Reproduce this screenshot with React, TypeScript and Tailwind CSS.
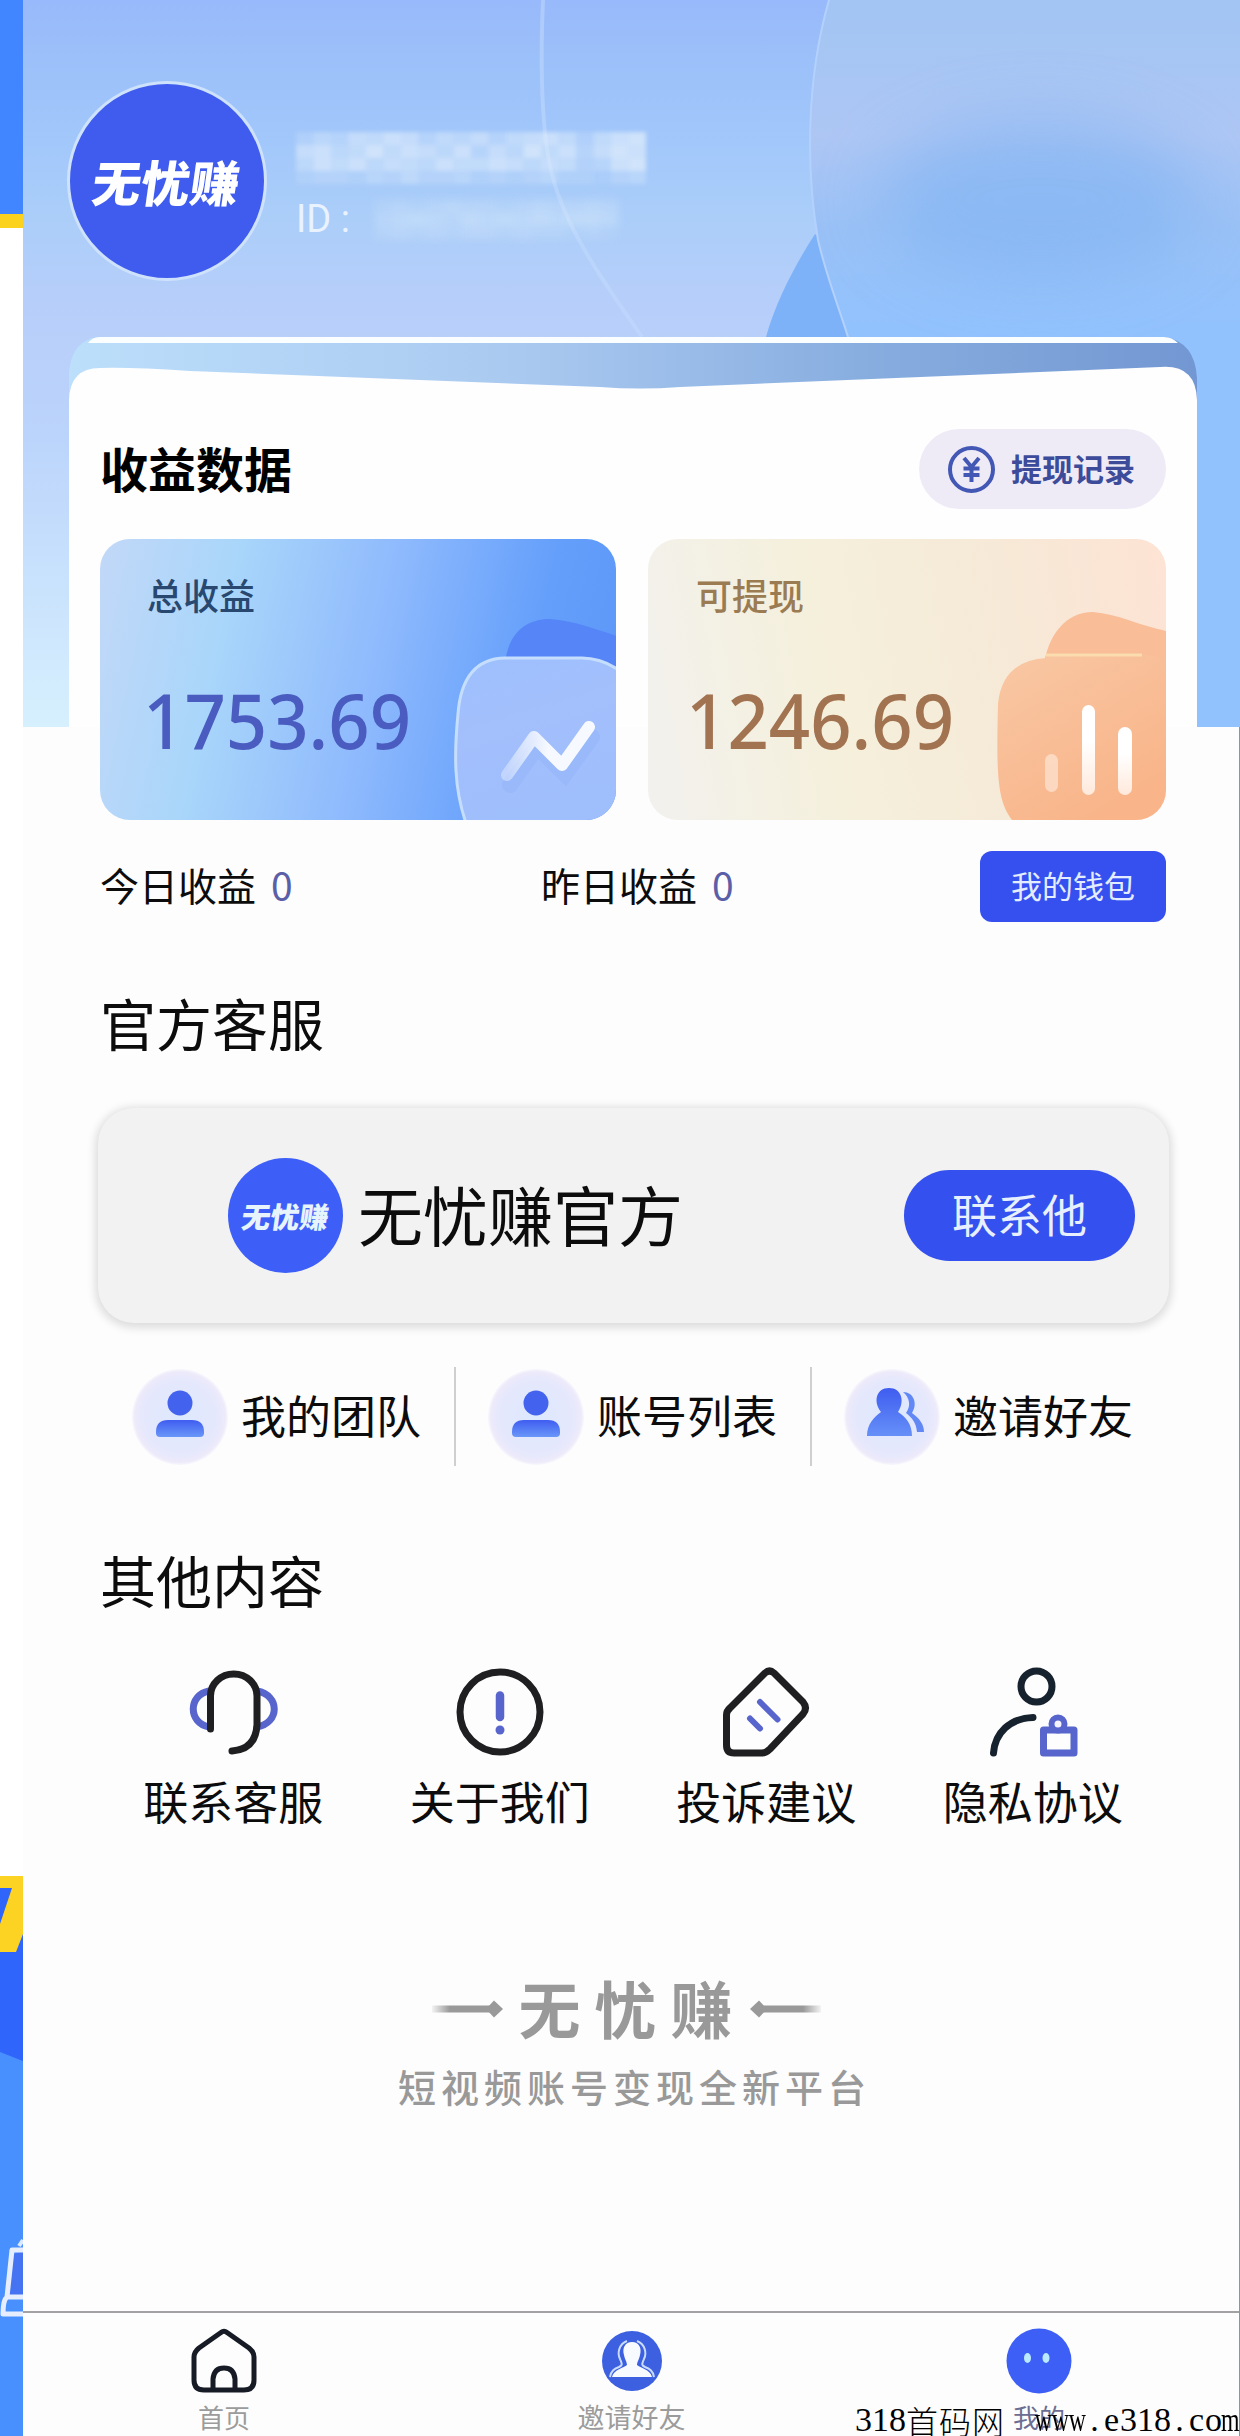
import React from 'react';

const nameMosaic = [
  [3, 5, 4, 7, 6, 8, 7, 4, 6, 5, 7, 4, 6, 7, 8, 6, 3, 6, 8, 9],
  [7, 8, 5, 6, 9, 6, 8, 7, 5, 8, 4, 7, 5, 9, 6, 8, 4, 7, 9, 8],
  [5, 8, 6, 8, 5, 7, 6, 5, 8, 6, 6, 8, 7, 5, 7, 6, 3, 4, 8, 9],
  [2, 3, 3, 2, 4, 3, 5, 3, 3, 4, 2, 3, 2, 3, 4, 2, 2, 1, 3, 4],
];

const idMosaic = [
  [2, 3, 2, 3, 4, 3, 3, 2, 3, 4, 3, 3, 4, 3],
  [3, 4, 5, 4, 3, 5, 4, 5, 4, 5, 4, 5, 5, 4],
  [2, 3, 2, 3, 2, 3, 3, 2, 3, 2, 2, 1, 2, 1],
];

function Mosaic({ rows, cell, className }: { rows: number[][]; cell: number; className: string }) {
  return (
    <svg className={className} width={rows[0].length * cell} height={rows.length * 13} viewBox={`0 0 ${rows[0].length * cell} ${rows.length * 13}`}>
      {rows.map((row, y) =>
        row.map((v, x) => (
          <rect key={`${x}-${y}`} x={x * cell} y={y * 13} width={cell} height={13} fill="#e3effb" opacity={v / 13} />
        ))
      )}
    </svg>
  );
}

function Backdrop() {
  return (
    <svg className="absolute left-0 top-0" width="1217" height="727" viewBox="23 0 1217 727">
      <defs>
        <linearGradient id="sky" x1="0" y1="0" x2="0" y2="1">
          <stop offset="0" stopColor="#98b9fb" />
          <stop offset="0.08" stopColor="#9cc0f9" />
          <stop offset="0.16" stopColor="#9fc5fb" />
          <stop offset="0.3" stopColor="#abcef9" />
          <stop offset="0.42" stopColor="#b7cefa" />
          <stop offset="0.6" stopColor="#bbd4fb" />
          <stop offset="0.8" stopColor="#c9e2fd" />
          <stop offset="1" stopColor="#d7f0fe" />
        </linearGradient>
        <linearGradient id="orb" gradientUnits="userSpaceOnUse" x1="0" y1="0" x2="0" y2="340">
          <stop offset="0" stopColor="#a2c5f3" />
          <stop offset="0.4" stopColor="#adc6f4" />
          <stop offset="0.68" stopColor="#99c1f6" />
          <stop offset="1" stopColor="#91c2fe" />
        </linearGradient>
        <linearGradient id="band" x1="0" y1="0" x2="1" y2="0">
          <stop offset="0" stopColor="#bcdffb" />
          <stop offset="0.4" stopColor="#aac9f0" />
          <stop offset="0.7" stopColor="#88aee0" />
          <stop offset="1" stopColor="#7397d2" />
        </linearGradient>
        <filter id="soft" x="-40%" y="-60%" width="180%" height="220%">
          <feGaussianBlur stdDeviation="32" />
        </filter>
      </defs>
      <rect x="23" width="1217" height="727" fill="url(#sky)" />
      <path d="M543 0 C540 70 541 130 552 175 C568 235 610 290 642 337" fill="none" stroke="#c4dcfd" strokeWidth="4" opacity="0.5" />
      <path d="M815 234 C797 262 776 300 766 337 H870 V280 Z" fill="#7eb2f8" />
      <path d="M829 0 C806 80 806 170 818 240 C826 275 838 305 848 337 V360 H1150 V727 H1240 V0 Z" fill="url(#orb)" />
      <path d="M829 0 C806 80 806 170 818 240 C826 275 838 305 848 337" fill="none" stroke="#b3d1fc" strokeWidth="2" />
      <ellipse cx="1040" cy="200" rx="160" ry="80" fill="#84b5f3" opacity="0.7" filter="url(#soft)" />
      {/* folded edge of the card */}
      <path d="M98 337 H1165 Q1195 342 1197 378 V400 H69 V372 Q72 340 98 337 Z" fill="url(#band)" />
      <path d="M88 343 Q92 337 100 337 H1164 Q1172 337 1178 343 Z" fill="#fbfeff" />
      <path d="M69 727 V400 Q70 368 100 368 Q130 367 190 371 L600 387 Q640 390 680 387 L1160 367 Q1196 364 1197 400 V727 Z" fill="#fefefe" />
    </svg>
  );
}

function SideStrip() {
  return (
    <aside className="flex w-[23px] flex-none flex-col bg-white">
      <div className="h-[214px] bg-[#4286ff]" />
      <div className="h-[14px] bg-[#fbd31f]" />
      <div className="h-[1648px]" />
      <svg width="23" height="560" viewBox="0 0 23 560">
        <rect width="23" height="560" fill="#4790fd" />
        <path d="M0 0 H23 V185 L0 176 Z" fill="#3065fb" />
        <path d="M0 0 H23 V58 L16 76 H0 V48 L12 12 H0 Z" fill="#fcd322" />
        <path d="M23 375 L11 379 L7 420 H23 Z" fill="#4673f2" />
        <path d="M23 374 H12 L7 421 H25 M7 421 Q3 424 3 438 H23" fill="none" stroke="#e6eefe" strokeWidth="5" strokeLinejoin="round" />
        <path d="M19 370 L23 364" stroke="#dbe8fe" strokeWidth="4" />
      </svg>
    </aside>
  );
}

function BlueArt() {
  return (
    <svg className="absolute inset-0" width="517" height="281" viewBox="0 0 517 281">
      <defs>
        <linearGradient id="tileBlue" x1="0" y1="0" x2="0.3" y2="1">
          <stop offset="0" stopColor="#9dc0fd" />
          <stop offset="0.45" stopColor="#a3bffc" />
          <stop offset="1" stopColor="#9fbefc" />
        </linearGradient>
        <linearGradient id="zig" x1="0" y1="0" x2="1" y2="0">
          <stop offset="0" stopColor="#ffffff" stopOpacity="0.35" />
          <stop offset="0.5" stopColor="#f6f9ff" />
        </linearGradient>
      </defs>
      <path d="M405 125 C408 95 425 80 450 80 C475 82 495 90 517 97 V160 H405 Z" fill="#5585f6" />
      <path d="M366 284 C354 250 354 215 358 175 Q362 120 405 119 H482 Q502 119 520 132 V284 Z" fill="url(#tileBlue)" stroke="#c6defe" strokeWidth="3" />
      <path d="M407 237 L434 199 L462 226 L489 189" transform="translate(3 9)" fill="none" stroke="#7fa5f7" strokeWidth="16" strokeLinecap="round" opacity="0.2" />
      <path d="M407 236 L434 198 L462 226 L489 188" fill="none" stroke="url(#zig)" strokeWidth="12" strokeLinecap="round" strokeLinejoin="round" />
    </svg>
  );
}

function OrangeArt() {
  return (
    <svg className="absolute inset-0" width="518" height="281" viewBox="0 0 518 281">
      <defs>
        <linearGradient id="tileOrange" x1="0" y1="0" x2="0.6" y2="1">
          <stop offset="0" stopColor="#f8c8a4" />
          <stop offset="1" stopColor="#f9b489" />
        </linearGradient>
        <linearGradient id="bar" x1="0" y1="0" x2="0" y2="1">
          <stop offset="0.4" stopColor="#ffffff" />
          <stop offset="1" stopColor="#ffe9db" />
        </linearGradient>
      </defs>
      <path d="M395 130 C400 95 418 73 445 73 C470 75 490 86 518 92 V170 H395 Z" fill="#f9bd98" />
      <path d="M364 281 C350 262 348 240 350 165 Q354 122 398 119 L402 115 H494 Q508 116 518 122 V281 Z" fill="url(#tileOrange)" />
      <path d="M398 116 H494" stroke="#fbdcae" strokeWidth="3" />
      <rect x="397" y="215" width="13" height="38" rx="6.5" fill="#fde0cc" opacity="0.8" />
      <rect x="434" y="166" width="13" height="90" rx="6.5" fill="url(#bar)" />
      <rect x="470" y="188" width="14" height="68" rx="7" fill="url(#bar)" />
    </svg>
  );
}

function PersonIcon({ id }: { id: string }) {
  return (
    <svg width="98" height="98" viewBox="0 0 98 98">
      <defs>
        <linearGradient id={id} x1="0" y1="0" x2="0" y2="1">
          <stop offset="0" stopColor="#3f5df0" />
          <stop offset="1" stopColor="#6a97f9" />
        </linearGradient>
        <radialGradient id={`${id}-bg`}>
          <stop offset="0" stopColor="#dce8fe" />
          <stop offset="0.8" stopColor="#e6e8fc" />
          <stop offset="0.94" stopColor="#edeafa" />
          <stop offset="1" stopColor="#edeafa" stopOpacity="0.3" />
        </radialGradient>
      </defs>
      <circle cx="49" cy="49" r="48" fill={`url(#${id}-bg)`} />
      <circle cx="49" cy="35" r="12.5" fill="#4362ee" />
      <path d="M25 64 Q25 52 37 52 H61 Q73 52 73 64 V65 Q73 69 69 69 H29 Q25 69 25 65 Z" fill={`url(#${id})`} />
    </svg>
  );
}

function FriendsIcon() {
  return (
    <svg width="98" height="98" viewBox="0 0 98 98">
      <defs>
        <linearGradient id="fr" x1="0" y1="0" x2="0" y2="1">
          <stop offset="0" stopColor="#3f5df0" />
          <stop offset="1" stopColor="#6690f8" />
        </linearGradient>
      </defs>
      <circle cx="49" cy="49" r="48" fill="url(#team-bg)" />
      <path d="M60 24 C71 24 75 36 69 45 C76 50 81 56 81 64 H74 C73 54 69 50 63 45 C68 38 67 30 60 24 Z" fill="#6288f5" />
      <path d="M46 20 C59 20 62 34 55 44 C63 49 69 56 69 68 H24 C24 56 31 49 38 44 C30 34 33 20 46 20 Z" fill="url(#fr)" />
    </svg>
  );
}

const shortcuts = [
  { label: '我的团队', icon: <PersonIcon id="team" /> },
  { label: '账号列表', icon: <PersonIcon id="accounts" /> },
  { label: '邀请好友', icon: <FriendsIcon /> },
];

const others = [
  {
    label: '联系客服',
    icon: (
      <>
        <path d="M21 24 C0 28 0 56 21 60 M69 24 C92 28 92 56 69 60" stroke="#5765cc" />
        <path d="M22.500 62 V29 A23.200 22 0 0 1 69 29 V58 C68 74 60 83 44 84" stroke="#1f1f21" />
      </>
    ),
  },
  {
    label: '关于我们',
    icon: (
      <>
        <circle cx="45" cy="45" r="40" stroke="#1f1f21" />
        <path d="M45 28.500 V50" stroke="#5765cc" strokeWidth="8.5" />
        <path d="M45 63 V63.1" stroke="#5765cc" strokeWidth="9" />
      </>
    ),
  },
  {
    label: '投诉建议',
    icon: (
      <>
        <path d="M44 6 Q48.500 2 53 6 L82 35 Q87 41 82 47 L49 82 Q45 86 41 86 H13 Q5.500 86 5.500 78 V48 Q5.500 44 9 41 Z" stroke="#1f1f21" />
        <path d="M39 35 L56.500 52.500 M29 51.500 L39 61.500" stroke="#5765cc" strokeWidth="6" />
      </>
    ),
  },
  {
    label: '隐私协议',
    icon: (
      <>
        <circle cx="48.500" cy="19.500" r="15.500" stroke="#17222f" />
        <path d="M5.500 86 C7 66 22 51 45 50.500" stroke="#17222f" />
        <path d="M55.500 63 H86 V86 H55.500 Z" stroke="#5765cc" />
        <circle cx="70" cy="57" r="6.500" stroke="#5765cc" strokeWidth="6" fill="#f3f4fd" />
      </>
    ),
  },
];

function Watermark() {
  return (
    <div className="absolute bottom-[-1px] right-0 flex h-[34px] items-center font-['Liberation_Serif','Noto_Sans_CJK_SC',serif] text-[34px] leading-[34px] text-black">
      <span>318</span>
      <span className="mr-[30px] font-['Noto_Sans_CJK_SC',sans-serif] text-[32px] font-light tracking-[1px]">首码网</span>
      {'www.e318.com'.split('').map((c, i) => (
        <span key={i} className="flex w-[17px] justify-center">
          <span className={c === 'w' || c === 'm' ? 'inline-block scale-x-[0.7]' : 'inline-block'}>{c}</span>
        </span>
      ))}
    </div>
  );
}

function App() {
  return (
    <div className="flex h-[2436px] w-[1240px] overflow-hidden bg-[#fdfdfd] font-['Noto_Sans_CJK_SC',sans-serif] leading-none text-[#0c0c0c]">
      <SideStrip />
      <div className="relative flex w-[1217px] flex-none flex-col border-r border-[#8b93a6]">
        <Backdrop />

        {/* Profile */}
        <header className="relative flex pl-[44px] pt-[81px]">
          <div className="flex h-[200px] w-[200px] items-center justify-center rounded-full border-[3px] border-[#cfe2fb] bg-[#3f5cee]">
            <span className="-mt-[2px] skew-x-[-8deg] whitespace-nowrap text-[49px] font-black text-white">无忧赚</span>
          </div>
          <div className="ml-[29px] pt-[51px]">
            <Mosaic rows={nameMosaic} cell={17.5} className="blur-[2px]" />
            <div className="mt-[12px] flex items-center">
              <span className="w-[78px] whitespace-nowrap font-['Roboto','Noto_Sans_CJK_SC',sans-serif] text-[38px] font-normal leading-[46px] text-[#e9f3ff]">ID :</span>
              <Mosaic rows={idMosaic} cell={17.5} className="blur-[4px]" />
            </div>
          </div>
        </header>

        <main className="relative w-[1143px] pl-[77px]">
          {/* Earnings */}
          <div className="mt-[148px] flex h-[80px] items-center justify-between">
            <h2 className="-mt-[5px] text-[48px] font-bold text-black">收益数据</h2>
            <div className="flex h-[80px] w-[247px] items-center rounded-full bg-[#eeebf7] pl-[29px]">
              <svg width="47" height="47" viewBox="0 0 47 47" fill="none" stroke="#4258b4">
                <circle cx="23.500" cy="23.500" r="21.500" strokeWidth="4" />
                <path d="M16 12 L23.500 21 L31 12 M23.500 21 V36 M15.500 22.500 H31.500 M15.500 29 H31.500" strokeWidth="4" />
              </svg>
              <span className="-mt-1 ml-[16px] text-[31px] font-bold text-[#3d4b9b]">提现记录</span>
            </div>
          </div>

          <div className="mt-[30px] flex justify-between">
            <div className="relative h-[281px] w-[516px] overflow-hidden rounded-[30px] bg-linear-[102deg,#c2d8f8_0%,#a9d6fa_24%,#8fbafd_52%,#649ffb_80%,#5b96f8_100%]">
              <BlueArt />
              <div className="relative pl-[47px] pt-[37px]">
                <p className="text-[36px] font-medium text-[#28486f]">总收益</p>
                <p className="-ml-[4px] mt-[64px] origin-left scale-x-[0.94] font-['Noto_Sans',sans-serif] text-[77px] font-medium leading-[88px] text-[#4a5cc0]">1753.69</p>
              </div>
            </div>
            <div className="relative h-[281px] w-[518px] overflow-hidden rounded-[30px] bg-linear-[80deg,#f2f1ee_0%,#f5f0dc_35%,#f5ebd8_60%,#fde3d4_100%]">
              <OrangeArt />
              <div className="relative pl-[43px] pt-[37px]">
                <p className="pl-[5px] text-[36px] font-medium text-[#9b7b52]">可提现</p>
                <p className="-ml-[5px] mt-[64px] origin-left scale-x-[0.94] font-['Noto_Sans',sans-serif] text-[77px] font-medium leading-[88px] text-[#a27350]">1246.69</p>
              </div>
            </div>
          </div>

          <div className="mt-[31px] flex h-[71px] items-center">
            <p className="-mt-1 w-[441px] text-[39px]">
              今日收益<span className="ml-[15px] text-[#5b5fa8]">0</span>
            </p>
            <p className="-mt-1 text-[39px]">
              昨日收益<span className="ml-[15px] text-[#5b5fa8]">0</span>
            </p>
            <button className="ml-auto h-[71px] w-[186px] rounded-xl bg-[#3650f0] pb-1 text-[31px] text-[#e3edff]">我的钱包</button>
          </div>

          {/* Support */}
          <h2 className="mt-[72px] text-[56px]">官方客服</h2>
          <div className="-ml-[2px] mt-[58px] flex h-[215px] w-[1071px] items-center rounded-[36px] bg-[#f2f2f2] pl-[130px] pr-[34px] shadow-[0_2px_9px_3px_rgba(0,0,0,0.13)]">
            <div className="flex h-[115px] w-[115px] items-center justify-center rounded-full bg-[#3d5ff8]">
              <span className="skew-x-[-8deg] whitespace-nowrap text-[29px] font-black text-[#e8f4fb]">无忧赚</span>
            </div>
            <span className="-mt-[4px] ml-[15px] text-[65px]">无忧赚官方</span>
            <button className="ml-auto h-[91px] w-[231px] rounded-full bg-[#3450ee] pb-1 text-[45px] text-[#e8f0ff]">联系他</button>
          </div>

          <div className="mt-[44px] flex">
            {shortcuts.map((item, i) => (
              <div key={item.label} className={`flex h-[99px] w-[356px] flex-none items-center pl-[31px] ${i < 2 ? 'border-r-2 border-[#cfcfcf]' : ''}`}>
                {item.icon}
                <span className="-mt-[4px] ml-[12px] whitespace-nowrap text-[45px]">{item.label}</span>
              </div>
            ))}
          </div>

          {/* Others */}
          <h2 className="mt-[85px] text-[56px]">其他内容</h2>
          <div className="mt-[60px] grid grid-cols-4">
            {others.map((item) => (
              <div key={item.label} className="flex flex-col items-center">
                <svg width="90" height="90" viewBox="0 0 90 90" fill="none" strokeWidth="7" strokeLinecap="round" strokeLinejoin="round">
                  {item.icon}
                </svg>
                <span className="mt-[21px] text-[45px]">{item.label}</span>
              </div>
            ))}
          </div>
        </main>

        {/* Brand */}
        <div className="mt-[153px] flex flex-col items-center pr-[9px] text-[#999]">
          <div className="flex items-center">
            <svg className="mt-[4px]" width="71" height="20" viewBox="0 0 71 20">
              <defs>
                <linearGradient id="tail" x1="0" y1="0" x2="1" y2="0">
                  <stop offset="0" stopColor="#999" stopOpacity="0.1" />
                  <stop offset="0.3" stopColor="#999" />
                </linearGradient>
              </defs>
              <rect y="6.500" width="60" height="7" fill="url(#tail)" />
              <path d="M62 1.500 L71 10 L62 18.500 L54 10 Z" fill="#999" />
            </svg>
            <span className="ml-[15px] mr-[3px] text-[62px] font-bold tracking-[14px]">无忧赚</span>
            <svg className="mt-[4px] -scale-x-100" width="71" height="20" viewBox="0 0 71 20">
              <rect y="6.500" width="60" height="7" fill="url(#tail)" />
              <path d="M62 1.500 L71 10 L62 18.500 L54 10 Z" fill="#999" />
            </svg>
          </div>
          <p className="mt-[29px] pl-[16px] text-[38px] font-medium tracking-[5px]">短视频账号变现全新平台</p>
        </div>

        {/* Tab bar */}
        <nav className="mt-auto flex h-[125px] justify-between border-t-2 border-[#a3a1a4] pl-[140px] pr-[139px] pt-[15px] text-[26px] text-[#9b9b9b]">
          <div className="flex w-[122px] flex-col items-center">
            <svg width="66" height="66" viewBox="0 0 66 66" fill="none" stroke="#171b25" strokeWidth="5" strokeLinejoin="round">
              <path d="M30 4.500 Q33 2 36 4.500 L58 20 Q63 24 63 29 V52 Q63 62 53 62 H13 Q3 62 3 52 V29 Q3 24 8 20 Z" />
              <path d="M22 62 V51 Q23 40 33 40 Q43 40 44 51 V62" />
            </svg>
            <span className="mt-[10px]">首页</span>
          </div>
          <div className="flex w-[122px] flex-col items-center">
            <svg width="66" height="66" viewBox="0 0 66 66">
              <circle cx="33" cy="33" r="30" fill="#3c60e0" />
              <path d="M33 14 C40 14 43 20 41 27 C40 32 38 34 38 37 C41 40 51 41 53 49 H13 C15 41 25 40 28 37 C28 34 26 32 25 27 C23 20 26 14 33 14 Z" fill="#f7fbff" />
              <path d="M28 13 C20 16 18 25 21 31 C23 36 24 37 20 39 C15 41 12 43 11 49 M38 13 C46 16 48 25 45 31 C43 36 42 37 46 39 C51 41 54 43 55 49" fill="none" stroke="#c9dcfb" strokeWidth="2" />
            </svg>
            <span className="mt-[9px] whitespace-nowrap text-[27px]">邀请好友</span>
          </div>
          <div className="flex w-[122px] flex-col items-center">
            <svg width="66" height="66" viewBox="0 0 66 66">
              <circle cx="33" cy="33" r="32.500" fill="#3e5ff6" />
              <ellipse cx="21.500" cy="30" rx="3.500" ry="5" fill="#b9eaff" />
              <ellipse cx="40" cy="30" rx="3.500" ry="5" fill="#b9eaff" />
            </svg>
            <span className="mt-[10px] text-[#6b6d92]">我的</span>
          </div>
        </nav>
        <Watermark />
      </div>
    </div>
  );
}

export default App;
